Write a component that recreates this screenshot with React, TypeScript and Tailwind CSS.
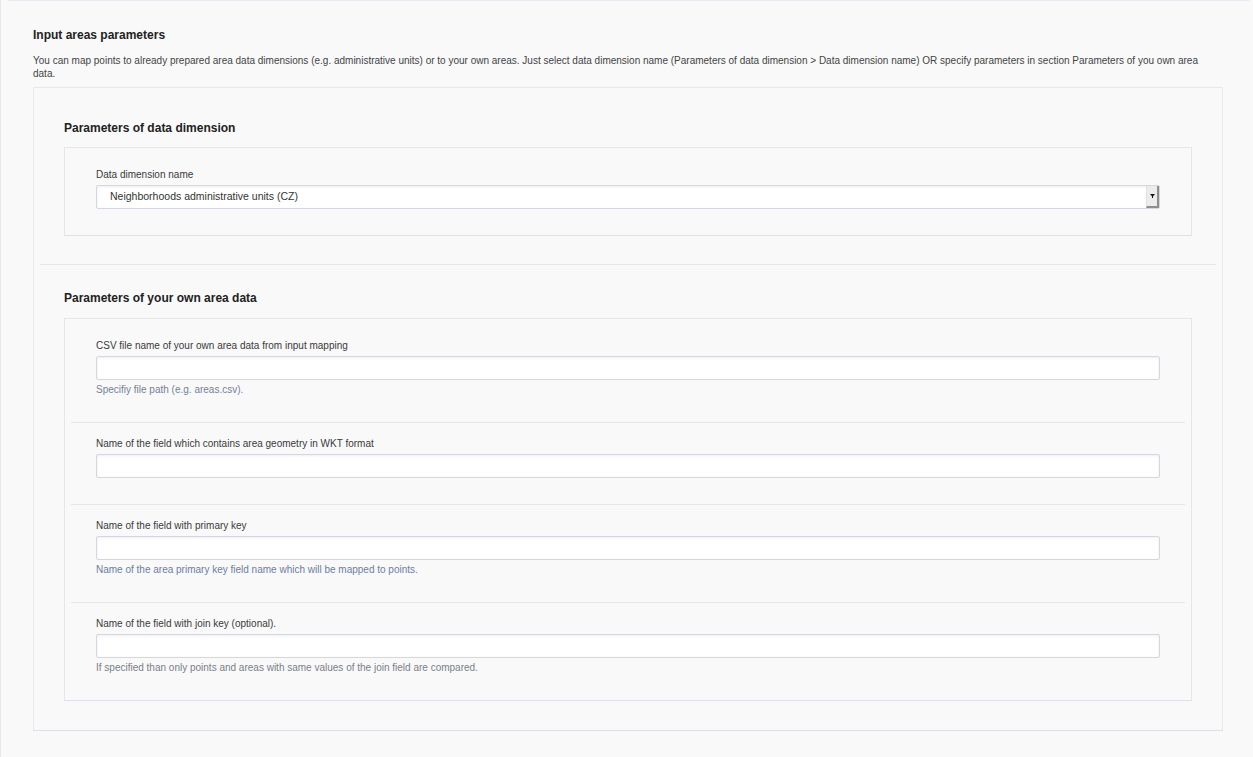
import React from "react";

type Field = { label: string; help?: string; helpTone?: string };

const fields: Field[] = [
  {
    label: "CSV file name of your own area data from input mapping",
    help: "Specifiy file path (e.g. areas.csv).",
    helpTone: "text-[#74819a]",
  },
  { label: "Name of the field which contains area geometry in WKT format" },
  {
    label: "Name of the field with primary key",
    help: "Name of the area primary key field name which will be mapped to points.",
    helpTone: "text-[#6b7ea3]",
  },
  {
    label: "Name of the field with join key (optional).",
    help: "If specified than only points and areas with same values of the join field are compared.",
    helpTone: "text-[#7a7f88]",
  },
];

function TextInput() {
  return (
    <input
      type="text"
      className="block w-full h-[24px] bg-white border border-[#d6d6de] rounded-[2px] shadow-[inset_0_1px_3px_rgba(0,0,0,0.07)] outline-none"
    />
  );
}

function SelectBox({ value }: { value: string }) {
  return (
    <div className="flex h-[24px] bg-white border border-[#d6d6de] rounded-[2px] shadow-[inset_0_1px_3px_rgba(0,0,0,0.07)]">
      <div className="flex-1 flex items-center pl-[13px] text-[10.5px] text-[#333]">{value}</div>
      <div className="w-[13px] flex items-center justify-center bg-[#ececec] border-l border-[#e2e2e2] border-r-2 border-b-2 border-r-[#8e8e8e] border-b-[#8e8e8e]">
        <svg width="5" height="4" viewBox="0 0 5 4">
          <path d="M0 0h5L2.5 3z" fill="#111" />
          <rect x="2" y="2" width="1" height="2" fill="#111" />
        </svg>
      </div>
    </div>
  );
}

function FieldBlock({ field, last }: { field: Field; last: boolean }) {
  return (
    <>
      <div className="px-[31px] pt-[15px] pb-[26px]">
        <div className="text-[10px] leading-[12px] text-[#3a3a3a] mb-[4px]">{field.label}</div>
        <TextInput />
        {field.help && (
          <div className={`text-[10px] leading-[12px] mt-[4px] ${field.helpTone}`}>{field.help}</div>
        )}
      </div>
      {!last && <div className="mx-[6px] border-t border-[#e6e6ea]" />}
    </>
  );
}

export default function App() {
  return (
    <div
      className="min-h-screen bg-[#f9f9f9] border-l border-[#e8e8e8] text-[#333]"
      style={{ fontFamily: '"Liberation Sans", Arial, sans-serif' }}
    >
      <div className="ml-[7px] mr-[4px] border-t border-[#e8e8ee]" />
      <div className="pl-[32px] pr-[30px] pt-[27px] pb-[28px]">
        <h2 className="text-[12px] leading-[14px] font-bold text-[#222]">Input areas parameters</h2>
        <p className="mt-[12px] pr-[14px] text-[10px] leading-[13px] text-[#444]">
          You can map points to already prepared area data dimensions (e.g. administrative units) or to your own
          areas. Just select data dimension name (Parameters of data dimension &gt; Data dimension name) OR specify
          parameters in section Parameters of you own area data.
        </p>

        <div className="mt-[7px] border border-[#e8e8e8] border-b-[#e0e0e8] pt-[33px] pb-[29px]">
          <div className="px-[30px]">
            <h3 className="text-[12px] leading-[14px] font-bold text-[#222]">Parameters of data dimension</h3>
            <div className="mt-[12px] border border-[#e6e6e6] border-b-[#e0e0e8]">
              <div className="px-[31px] pt-[21px] pb-[26px]">
                <div className="text-[10px] leading-[12px] text-[#3a3a3a] mb-[4px]">Data dimension name</div>
                <SelectBox value="Neighborhoods administrative units (CZ)" />
              </div>
            </div>
          </div>

          <div className="mx-[6px] mt-[28px] border-t border-[#e6e6ea]" />

          <div className="px-[30px] pt-[26px]">
            <h3 className="text-[12px] leading-[14px] font-bold text-[#222]">Parameters of your own area data</h3>
            <div className="mt-[13px] border border-[#e6e6e6] border-b-[#e0e0e8] pt-[6px]">
              {fields.map((f, i) => (
                <FieldBlock key={f.label} field={f} last={i === fields.length - 1} />
              ))}
            </div>
          </div>
        </div>
      </div>
    </div>
  );
}
